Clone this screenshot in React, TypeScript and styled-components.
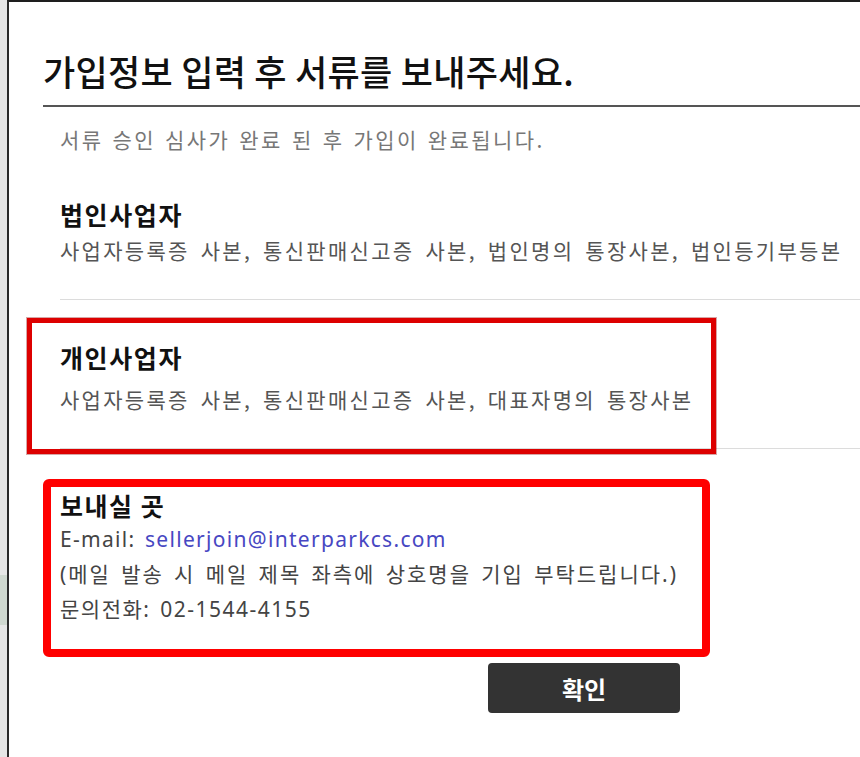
import React from 'react';
import styled, { createGlobalStyle } from 'styled-components';

const GlobalStyle = createGlobalStyle`
  html, body {
    margin: 0;
    padding: 0;
    background: #fff;
  }
  body {
    font-family: "Noto Sans", "Noto Sans CJK KR", sans-serif;
    color: #222;
  }
`;

type Doc = {
  title: string;
  files: string;
  marked?: boolean;
};

const docs: Doc[] = [
  {
    title: '법인사업자',
    files: '사업자등록증 사본, 통신판매신고증 사본, 법인명의 통장사본, 법인등기부등본',
  },
  {
    title: '개인사업자',
    files: '사업자등록증 사본, 통신판매신고증 사본, 대표자명의 통장사본',
    marked: true,
  },
];

const Page = styled.div`
  display: flex;
  width: 860px;
  height: 757px;
  overflow: hidden;
`;

const BackStrip = styled.div`
  width: 7px;
  flex-shrink: 0;
  background: linear-gradient(
    to bottom,
    #e6e6e6 0,
    #e6e6e6 575px,
    #cfd8d0 575px,
    #cfd8d0 625px,
    #e6e6e6 625px
  );
`;

const Popup = styled.div`
  flex: 1;
  border-left: 2px solid #2a2a2a;
  border-top: 2px solid #1e1e1e;
  padding: 46px 0 0 34px;
  background: #fff;
`;

const Heading = styled.h1`
  margin: 0;
  padding-bottom: 11px;
  border-bottom: 2px solid #555;
  font-family: "Noto Sans CJK KR", sans-serif;
  font-size: 35px;
  line-height: 46px;
  font-weight: 500;
  letter-spacing: 0.3px;
  color: #111;
`;

const Body = styled.div`
  padding-left: 17px;
`;

const Notice = styled.p`
  margin: 18px 0 0;
  padding-bottom: 4px;
  font-family: "Noto Sans CJK KR", sans-serif;
  font-size: 21px;
  line-height: 28px;
  letter-spacing: 2.4px;
  word-spacing: 2px;
  color: #777;
`;

const SectionTitle = styled.h2`
  margin: 0;
  font-family: "Noto Sans CJK KR", sans-serif;
  font-size: 25px;
  line-height: 34px;
  font-weight: 700;
  letter-spacing: 1.6px;
  color: #111;
`;

const Files = styled.p`
  margin: 4px 0 0;
  font-family: "Noto Sans CJK KR", sans-serif;
  font-size: 21px;
  line-height: 30px;
  letter-spacing: 2.3px;
  word-spacing: 4px;
  color: #555;
`;

const Section = styled.section<{ $marked?: boolean }>`
  position: relative;
  padding: 40px 0 34px;
  border-bottom: 1px solid #dcdcdc;

  ${Files} {
    margin-top: ${(p) => (p.$marked ? '10px' : '4px')};
  }
`;

const Mark = styled.div`
  position: absolute;
  left: -33px;
  top: 18px;
  width: 689px;
  height: 136px;
  box-sizing: border-box;
  border: 5px solid #dd0000;
  box-shadow: 0 0 0 1px rgba(140, 0, 0, 0.35);
  pointer-events: none;
`;

const SendBox = styled.div`
  margin-top: 30px;
  width: 667px;
  height: 178px;
  box-sizing: border-box;
  border: 8px solid #ff0000;
  border-radius: 6px;
  padding: 2px 0 0 9px;
  color: #444;
`;

const SendTitle = styled.h3`
  margin: 0;
  font-family: "Noto Sans CJK KR", sans-serif;
  font-size: 25px;
  line-height: 33px;
  font-weight: 700;
  letter-spacing: 1.5px;
  color: #111;
`;

const Line = styled.div<{ $spacing: number }>`
  font-size: 21px;
  line-height: 35px;
  letter-spacing: ${(p) => p.$spacing}px;
  word-spacing: 2.8px;
`;

const Mail = styled.a`
  color: #4747c2;
  text-decoration: none;
`;

const ButtonRow = styled.div`
  padding: 6px 0 0 445px;
`;

const ConfirmButton = styled.button`
  width: 192px;
  height: 50px;
  border: none;
  border-radius: 4px;
  background: #333;
  color: #fff;
  font-family: "Noto Sans CJK KR", sans-serif;
  font-size: 24px;
  font-weight: 700;
  cursor: pointer;
`;

export default function App() {
  return (
    <>
      <GlobalStyle />
      <Page>
        <BackStrip />
        <Popup>
          <Heading>가입정보 입력 후 서류를 보내주세요.</Heading>
          <Body>
            <Notice>서류 승인 심사가 완료 된 후 가입이 완료됩니다.</Notice>
            {docs.map((doc) => (
              <Section key={doc.title} $marked={doc.marked}>
                <SectionTitle>{doc.title}</SectionTitle>
                <Files>{doc.files}</Files>
                {doc.marked && <Mark />}
              </Section>
            ))}
          </Body>
          <SendBox>
            <SendTitle>보내실 곳</SendTitle>
            <Line $spacing={1.3}>
              E-mail: <Mail href="mailto:sellerjoin@interparkcs.com">sellerjoin@interparkcs.com</Mail>
            </Line>
            <Line $spacing={2}>(메일 발송 시 메일 제목 좌측에 상호명을 기입 부탁드립니다.)</Line>
            <Line $spacing={1.5}>문의전화: 02-1544-4155</Line>
          </SendBox>
          <ButtonRow>
            <ConfirmButton type="button">확인</ConfirmButton>
          </ButtonRow>
        </Popup>
      </Page>
    </>
  );
}
